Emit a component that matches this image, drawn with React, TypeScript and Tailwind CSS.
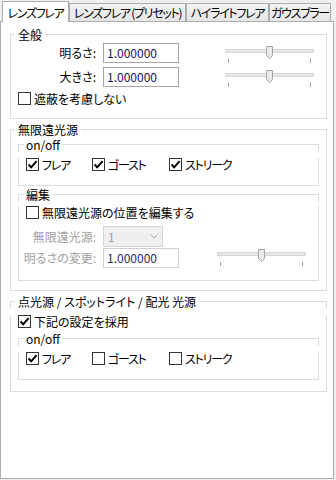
import type { ReactNode } from 'react'

const tabs = ['レンズフレア', 'レンズフレア (プリセット)', 'ハイライトフレア', 'ガウスブラー']
const tabWidths = ['w-[117px]', 'w-[83px]', 'w-[62px]']

function Check({ checked, label, tight, className = '' }: { checked?: boolean; label: string; tight?: boolean; className?: string }) {
  return (
    <div className={`flex items-center h-[13px] shrink-0 ${className}`}>
      <span className="w-[13px] h-[13px] border border-[#333333] bg-white flex items-center justify-center shrink-0">
        {checked && (
          <svg width="11" height="11" viewBox="0 0 11 11" fill="none">
            <path d="M1.5 5.5L4.2 8.3L9.6 2.2" stroke="#000" strokeWidth="2" />
          </svg>
        )}
      </span>
      <span className={`ml-[3px] leading-[13px] whitespace-nowrap ${tight ? 'tracking-[-1.2px]' : ''}`}>{label}</span>
    </div>
  )
}

// group box: top border row is drawn as two line segments around the caption
function Group({ title, inner, className = '', children }: { title: string; inner?: boolean; className?: string; children: ReactNode }) {
  return (
    <div className={className}>
      <div className="flex h-[15px]">
        <div className={`${inner ? 'w-[6px]' : 'w-[5px]'} mt-[7px] border-l border-t border-[#dcdcdc] shrink-0`} />
        <div className={`leading-[15px] whitespace-nowrap ${inner ? 'px-[2px]' : 'px-[3px]'}`}>{title}</div>
        <div className="flex-1 mt-[7px] border-t border-r border-[#dcdcdc]" />
      </div>
      <div className="border-l border-r border-b border-[#dcdcdc]">{children}</div>
    </div>
  )
}

function Slider({ className = '' }: { className?: string }) {
  return (
    <svg width="92" height="20" viewBox="0 0 92 20" className={`shrink-0 ${className}`}>
      <rect x="2.5" y="6.5" width="88" height="3" fill="#e7e7e7" stroke="#d6d6d6" />
      <path d="M43.5 3.5H49.5V12.5L46.5 15.5L43.5 12.5Z" fill="#e9e9e9" stroke="#a5a5a5" />
      <line x1="5.5" y1="16" x2="5.5" y2="20" stroke="#a0a0a0" />
      <line x1="87.5" y1="16" x2="87.5" y2="20" stroke="#a0a0a0" />
    </svg>
  )
}

function OnOff({ flags, className = '' }: { flags: boolean[]; className?: string }) {
  return (
    <Group title="on/off" inner className={`ml-[7px] w-[301px] ${className}`}>
      <div className="flex mt-[6px] ml-[7px] mb-[14px]">
        <div className="w-[66px]"><Check checked={flags[0]} label="フレア" tight /></div>
        <div className="w-[77px]"><Check checked={flags[1]} label="ゴースト" tight /></div>
        <Check checked={flags[2]} label="ストリーク" tight />
      </div>
    </Group>
  )
}

export default function App() {
  return (
    <div className="w-[336px] h-[480px] bg-[#f0f0f0] text-[12px] text-black font-['Noto_Sans_CJK_JP','Noto_Sans',sans-serif] [font-feature-settings:'palt']">
      {/* Tabs */}
      <div className="flex items-end h-[21px] pl-[2px] tracking-[-1.3px]">
        <div className="relative z-10 -mb-px w-[67px] h-[21px] pt-[1px] bg-white border-l border-t border-r border-[#acacac] flex items-center justify-center whitespace-nowrap">
          {tabs[0]}
        </div>
        {tabs.slice(1).map((t, i) => (
          <div
            key={t}
            className={`${tabWidths[i]} h-[18px] border-l border-t border-r border-[#acacac] bg-gradient-to-b from-[#f3f3f3] to-[#e6e6e6] flex items-center justify-center whitespace-nowrap overflow-hidden`}
          >
            {t}
          </div>
        ))}
      </div>

      {/* Panel */}
      <div className="w-[334px] h-[458px] bg-white border border-[#acacac] pt-[5px]">
        <Group title="全般" className="ml-[9px] w-[317px]">
          <div className="flex items-start pt-[1px]">
            <div className="w-[85px] h-[20px] flex items-center justify-end">明るさ:</div>
            <div className="ml-[7px] w-[76px] h-[20px] border border-[#a5a5a5] pl-[3px] flex items-center text-[#14145a]">1.000000</div>
            <Slider className="ml-auto mr-[11px]" />
          </div>
          <div className="flex items-start mt-[4px]">
            <div className="w-[85px] h-[20px] flex items-center justify-end">大きさ:</div>
            <div className="ml-[7px] w-[76px] h-[20px] border border-[#a5a5a5] pl-[3px] flex items-center text-[#14145a]">1.000000</div>
            <Slider className="ml-auto mr-[11px]" />
          </div>
          <Check label="遮蔽を考慮しない" className="mt-[5px] ml-[7px] mb-[13px]" />
        </Group>

        <Group title="無限遠光源" className="ml-[9px] w-[317px] mt-[3px]">
          <OnOff flags={[true, true, true]} />
          <Group title="編集" inner className="ml-[7px] w-[301px] mt-[1px] mb-[9px]">
            <Check label="無限遠光源の位置を編集する" className="mt-[4px] ml-[7px]" />
            <div className="flex items-center mt-[7px]">
              <div className="w-[77px] h-[21px] flex items-center justify-end text-[#a0a0a0]">無限遠光源:</div>
              <div className="ml-[7px] w-[60px] h-[21px] border border-[#d5d5d5] bg-[#efefef] pl-[4px] pr-[4px] flex items-center justify-between text-[#a0a0a0]">
                <span>1</span>
                <svg width="8" height="5" viewBox="0 0 8 5" fill="none">
                  <path d="M0.5 0.5L4 4L7.5 0.5" stroke="#a8a8a8" />
                </svg>
              </div>
            </div>
            <div className="flex items-start mt-[1px] mb-[12px]">
              <div className="w-[77px] h-[20px] flex items-center justify-end text-[#a0a0a0]">明るさの変更:</div>
              <div className="ml-[7px] w-[76px] h-[20px] border border-[#d0d0d0] pl-[3px] flex items-center text-[#2a2a60]">1.000000</div>
              <Slider className="ml-auto mr-[11px] -mt-[2px]" />
            </div>
          </Group>
        </Group>

        <Group title="点光源 / スポットライト / 配光 光源" className="ml-[9px] w-[317px] mt-[3px]">
          <Check checked label="下記の設定を採用" className="mt-[6px] ml-[7px]" />
          <OnOff flags={[true, false, false]} className="mt-[3px] mb-[11px]" />
        </Group>
      </div>
    </div>
  )
}
